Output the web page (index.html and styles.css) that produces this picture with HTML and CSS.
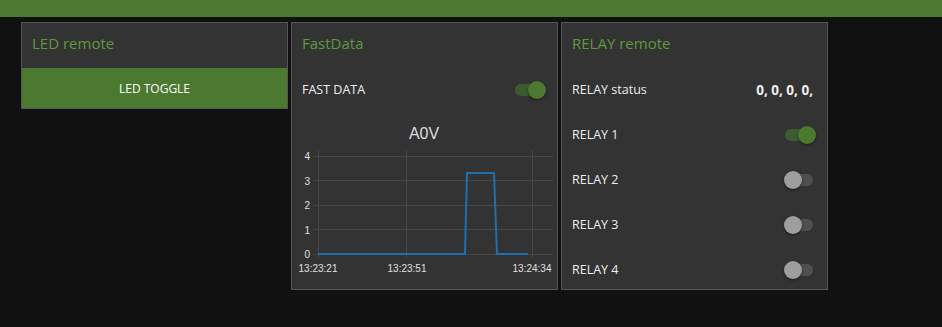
FILE: index.html
```html
<!DOCTYPE html>
<html lang="en">
<head>
  <meta charset="UTF-8" />
  <meta name="viewport" content="width=device-width, initial-scale=1.0"/>
  <title>Dashboard</title>
  <link rel="stylesheet" href="styles.css">
</head>
<body>
  <div class="topbar"></div>

  <div class="groups">
    <div class="card card-short">
      <div class="card-title">LED remote</div>
      <button class="btn">LED TOGGLE</button>
    </div>

    <div class="card">
      <div class="card-title">FastData</div>
      <div class="row">
        <span>FAST DATA</span>
        <span class="switch on"><span class="knob"></span></span>
      </div>
      <svg class="chart" width="264" height="175" viewBox="0 0 264 175">
        <text x="132" y="26" class="chart-title" text-anchor="middle">A0V</text>
        <g class="grid">
          <line x1="22" y1="43.5" x2="261" y2="43.5"/>
          <line x1="22" y1="67.5" x2="261" y2="67.5"/>
          <line x1="22" y1="92.5" x2="261" y2="92.5"/>
          <line x1="22" y1="116.5" x2="261" y2="116.5"/>
          <line x1="22" y1="141.5" x2="261" y2="141.5"/>
          <line x1="26.5" y1="37" x2="26.5" y2="145"/>
          <line x1="114.5" y1="37" x2="114.5" y2="145"/>
          <line x1="240.5" y1="37" x2="240.5" y2="145"/>
        </g>
        <g class="axis">
          <text x="18" y="47" text-anchor="end">4</text>
          <text x="18" y="72" text-anchor="end">3</text>
          <text x="18" y="96" text-anchor="end">2</text>
          <text x="18" y="121" text-anchor="end">1</text>
          <text x="18" y="145" text-anchor="end">0</text>
          <text x="26" y="159" text-anchor="middle">13:23:21</text>
          <text x="115" y="159" text-anchor="middle">13:23:51</text>
          <text x="240" y="159" text-anchor="middle">13:24:34</text>
        </g>
        <path class="series" d="M26 141 L173 141 L175 60 L202 60 L205 141 L236 141"/>
      </svg>
    </div>

    <div class="card">
      <div class="card-title">RELAY remote</div>
      <div class="row">
        <span>RELAY status</span>
        <span class="value">0, 0, 0, 0,</span>
      </div>
      <div class="row">
        <span>RELAY 1</span>
        <span class="switch on"><span class="knob"></span></span>
      </div>
      <div class="row">
        <span>RELAY 2</span>
        <span class="switch"><span class="knob"></span></span>
      </div>
      <div class="row">
        <span>RELAY 3</span>
        <span class="switch"><span class="knob"></span></span>
      </div>
      <div class="row">
        <span>RELAY 4</span>
        <span class="switch"><span class="knob"></span></span>
      </div>
    </div>
  </div>
</body>
</html>
```

FILE: styles.css
```css
body {
  margin: 0;
  background-color: #111111;
  font-family: "Open Sans", "Noto Sans", sans-serif;
  color: #eeeeee;
}
.topbar {
  height: 17px;
  background-color: #4b7930;
}
.groups {
  display: flex;
  align-items: flex-start;
  gap: 3px;
  padding: 5px 0 0 21px;
}
.card {
  box-sizing: border-box;
  width: 267px;
  height: 268px;
  background-color: #333333;
  border: 1px solid #555555;
  overflow: hidden;
}
.card-short {
  height: auto;
}
.card-title {
  height: 44px;
  line-height: 41px;
  padding-left: 10px;
  font-size: 15px;
  color: #5d9a3d;
}
.card-short .card-title {
  height: 45px;
}
.btn {
  display: block;
  width: 100%;
  height: 40px;
  border: none;
  background-color: #4b7930;
  color: #ffffff;
  font-family: "Open Sans", "Noto Sans", sans-serif;
  font-size: 12px;
}
.row {
  height: 45px;
  display: flex;
  align-items: center;
  justify-content: space-between;
  padding: 0 14px 0 10px;
  font-size: 12.5px;
}
.value {
  font-weight: bold;
  font-size: 13.5px;
}
.switch {
  position: relative;
  width: 28px;
  height: 12px;
  border-radius: 6px;
  background-color: #4f4f4f;
}
.knob {
  position: absolute;
  top: -3px;
  left: -1px;
  width: 18px;
  height: 18px;
  border-radius: 50%;
  background-color: #9e9e9e;
  box-shadow: 0 1px 3px rgba(0, 0, 0, 0.5);
}
.switch.on {
  background-color: #3e5b30;
}
.switch.on .knob {
  left: auto;
  right: -3px;
  background-color: #4b7930;
}
.chart {
  display: block;
  margin-top: 1px;
}
.chart-title {
  font-family: "Liberation Sans", Arial, sans-serif;
  font-size: 16px;
  fill: #dddddd;
}
.grid line {
  stroke: #474747;
  stroke-width: 1;
}
.axis text {
  font-family: "Liberation Sans", Arial, sans-serif;
  font-size: 10px;
  fill: #e0e0e0;
}
.series {
  fill: none;
  stroke: #1f6fae;
  stroke-width: 2;
}
```
